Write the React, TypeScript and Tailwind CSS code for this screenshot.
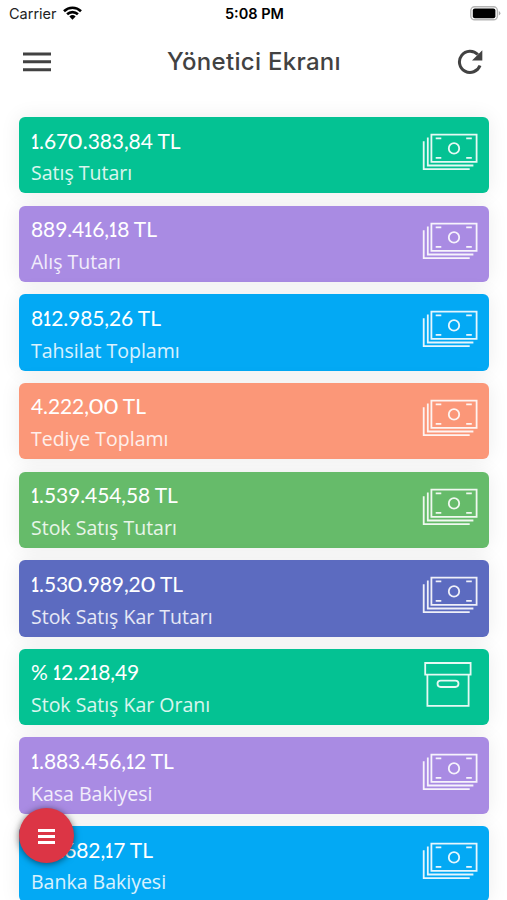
import type { ReactNode } from "react";

type IconName = "money" | "box";

interface Summary {
  readonly amount: string;
  readonly label: string;
  readonly color: string;
  readonly icon: IconName;
}

const SUMMARIES: readonly Summary[] = [
  { amount: "1.670.383,84 TL", label: "Satış Tutarı", color: "bg-[#04c293]", icon: "money" },
  { amount: "889.416,18 TL", label: "Alış Tutarı", color: "bg-[#a98be3]", icon: "money" },
  { amount: "812.985,26 TL", label: "Tahsilat Toplamı", color: "bg-[#03a9f4]", icon: "money" },
  { amount: "4.222,00 TL", label: "Tediye Toplamı", color: "bg-[#fb9778]", icon: "money" },
  { amount: "1.539.454,58 TL", label: "Stok Satış Tutarı", color: "bg-[#66bb6a]", icon: "money" },
  { amount: "1.530.989,20 TL", label: "Stok Satış Kar Tutarı", color: "bg-[#5c6bc0]", icon: "money" },
  { amount: "% 12.218,49", label: "Stok Satış Kar Oranı", color: "bg-[#04c293]", icon: "box" },
  { amount: "1.883.456,12 TL", label: "Kasa Bakiyesi", color: "bg-[#a98be3]", icon: "money" },
  { amount: "151.682,17 TL", label: "Banka Bakiyesi", color: "bg-[#03a9f4]", icon: "money" },
];

function MoneyIcon() {
  return (
    <svg width="56" height="38" viewBox="0 0 56 38" fill="none" stroke="currentColor" strokeWidth="1.8" className="mt-4 mr-[11px] opacity-90">
      <path d="M9.4 1.6h45.2v27.2H9.4z" />
      <path d="M5.8 4.6v27.9h45.6M1.7 8.2v27.9h46" />
      <circle cx="32" cy="15.4" r="5.2" />
      <path d="M13.7 5.4h5.6M44.2 5.4h5.6M13.7 24.8h5.6M44.2 24.8h5.6" />
    </svg>
  );
}

function BoxIcon() {
  return (
    <svg width="48" height="46" viewBox="0 0 48 46" fill="none" stroke="currentColor" strokeWidth="1.8" className="mt-3 mr-[17px] opacity-90">
      <path d="M1.2 2h45.4v11.6H1.2zM3.4 13.6v31.2h41.2V13.6" />
      <rect x="13.5" y="19.6" width="21" height="6.4" rx="3.2" />
    </svg>
  );
}

// Proportional figures: narrow ones, round zeros.
function Amount({ value }: { value: string }) {
  return (
    <p className="font-['Lato',sans-serif] text-[21px] leading-7 tracking-[-0.1px] whitespace-nowrap">
      {value.split(/([01])/).map((part, index) => {
        if (part === "1") return <span key={index} className="-mx-[2px] inline-block scale-x-[0.66] font-bold">1</span>;
        if (part === "0") return <span key={index} className="mx-[1.3px] inline-block scale-x-[1.2]">0</span>;
        return part;
      })}
    </p>
  );
}

function SummaryCard({ summary }: { summary: Summary }) {
  return (
    <section
      className={`flex h-[76.3px] shrink-0 justify-between rounded-md pl-3 text-white shadow-[0_0_20px_rgba(0,0,0,0.08)] ${summary.color}`}
    >
      <div className="pt-[9.5px]">
        <Amount value={summary.amount} />
        <p className="mt-[4.8px] font-['Open_Sans',sans-serif] text-[19.5px] leading-7 whitespace-nowrap text-white/85">
          {summary.label}
        </p>
      </div>
      {summary.icon === "money" ? <MoneyIcon /> : <BoxIcon />}
    </section>
  );
}

function StatusBar() {
  return (
    <div className="grid h-[27px] grid-cols-3 items-center pr-[7px] pl-[9px] font-['Inter',sans-serif] text-[14.5px] text-[#222]">
      <div className="flex items-center gap-1.5">
        Carrier
        <svg width="19" height="14" viewBox="0 0 19 14" fill="none" stroke="#000" strokeWidth="2.6" className="mb-px">
          <path d="M1 5.2a12.2 12.2 0 0 1 17 0M4.1 8.3a7.8 7.8 0 0 1 10.8 0" />
          <path d="M6.4 10.5a4.5 4.5 0 0 1 6.2 0L9.5 13.7z" fill="#000" stroke="none" />
        </svg>
      </div>
      <span className="text-center font-semibold text-black">5:08 PM</span>
      <svg width="31" height="15" viewBox="0 0 31 15" className="-mr-px justify-self-end">
        <rect x="0.8" y="0.8" width="26.6" height="13" rx="3.8" fill="#fff" stroke="#b5b5b5" strokeWidth="1.4" />
        <rect x="2.8" y="2.4" width="22.6" height="9.8" rx="2" fill="#000" />
        <path d="M28.8 5v4.6q1.6-.8 1.6-2.3T28.8 5" fill="#aaa" />
      </svg>
    </div>
  );
}

function IconButton({ label, children }: { label: string; children: ReactNode }) {
  return (
    <button type="button" aria-label={label} className="flex items-center justify-center">
      {children}
    </button>
  );
}

function Header() {
  return (
    <header className="flex h-[69px] items-center justify-between pr-6 pl-[23px] text-[#424242]">
      <IconButton label="Menu">
        <svg width="28" height="20" viewBox="0 0 28 20" fill="currentColor">
          <path d="M0 .5h28v3H0zM0 8.3h28v3H0zM0 16.2h28v3H0z" />
        </svg>
      </IconButton>
      <h1 className="font-['Inter',sans-serif] text-2xl font-medium tracking-[0.3px]">Yönetici Ekranı</h1>
      <IconButton label="Refresh">
        <svg width="26" height="26" viewBox="0 0 26 26">
          <path d="M23 16.5A10.6 10.6 0 1 1 20.8 5.6" fill="none" stroke="currentColor" strokeWidth="3" />
          <path d="M25.3 1.2v10.2H15z" fill="currentColor" />
        </svg>
      </IconButton>
    </header>
  );
}

export default function App() {
  return (
    <div className="relative h-[900px] w-[507px] overflow-hidden bg-white">
      <StatusBar />
      <Header />
      <main className="mt-[21px] flex flex-col gap-[12.35px] pr-[18px] pl-[19px]">
        {SUMMARIES.map((summary) => (
          <SummaryCard key={summary.label} summary={summary} />
        ))}
      </main>
      <button
        type="button"
        aria-label="Actions"
        className="absolute top-[808px] left-[19px] flex size-[55px] items-center justify-center rounded-full bg-[#dc3545] text-white shadow-[0_1px_7px_rgba(0,0,0,0.55)]"
      >
        <svg width="17" height="15" viewBox="0 0 17 15" fill="currentColor" className="mt-0.5">
          <path d="M0 0h17v3H0zM0 6h17v3H0zM0 12h17v3H0z" />
        </svg>
      </button>
    </div>
  );
}
